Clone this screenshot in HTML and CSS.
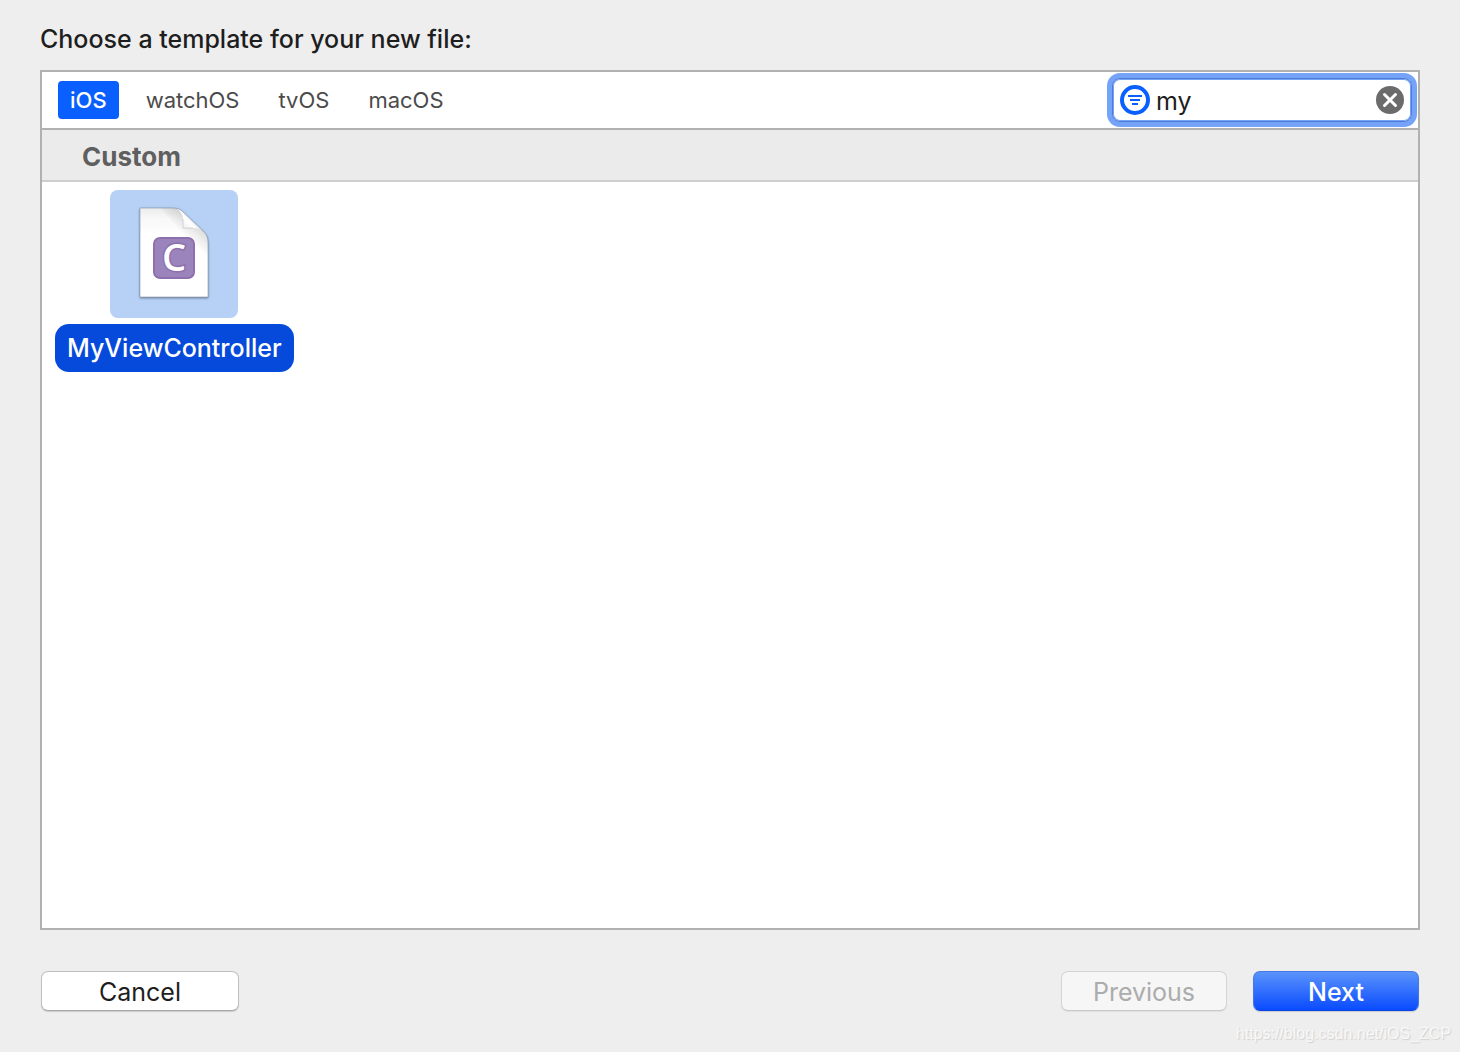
FILE: index.html
```html
<!DOCTYPE html>
<html lang="en">
<head>
  <meta charset="UTF-8">
  <meta name="viewport" content="width=device-width, initial-scale=1.0">
  <title>New File</title>
  <link rel="stylesheet" href="styles.css">
</head>
<body>

  <main class="dialog">
    <h1 class="dialog-title">Choose a template for your new file:</h1>

    <section class="panel">
      <div class="toolbar">
        <nav class="tabs">
          <button type="button" class="tab active">iOS</button>
          <button type="button" class="tab">watchOS</button>
          <button type="button" class="tab">tvOS</button>
          <button type="button" class="tab">macOS</button>
        </nav>

        <div class="search">
          <svg class="filter-icon" width="30" height="30" viewBox="0 0 30 30" aria-hidden="true">
            <circle cx="15" cy="15" r="13" fill="#fff" stroke="#0a60ff" stroke-width="4"/>
            <path d="M8 11h14M10 15h10M12 19h6" fill="none" stroke="#0a60ff" stroke-width="2"/>
          </svg>
          <input type="text" class="search-input" aria-label="Filter" value="my">
          <button type="button" class="clear-button" aria-label="Clear">
            <svg width="28" height="28" viewBox="0 0 28 28" aria-hidden="true">
              <circle cx="14" cy="14" r="14" fill="#6b6b6b"/>
              <path d="M8.500 8.500l11 11M19.500 8.500l-11 11" stroke="#fff" stroke-width="3" stroke-linecap="round"/>
            </svg>
          </button>
        </div>
      </div>

      <h2 class="group-title">Custom</h2>

      <div class="templates">
        <button type="button" class="template">
          <span class="template-icon">
            <svg width="128" height="128" viewBox="0 0 128 128" aria-hidden="true">
              <defs>
                <linearGradient id="paper" x1="0" y1="0" x2="0" y2="1">
                  <stop offset="0" stop-color="#ececec"/>
                  <stop offset="0.12" stop-color="#f8f8f8"/>
                  <stop offset="0.3" stop-color="#fff"/>
                </linearGradient>
                <linearGradient id="shade" gradientUnits="userSpaceOnUse" x1="86" y1="29" x2="72" y2="44">
                  <stop offset="0" stop-color="#000" stop-opacity="0.16"/>
                  <stop offset="1" stop-color="#000" stop-opacity="0"/>
                </linearGradient>
                <linearGradient id="fold" gradientUnits="userSpaceOnUse" x1="84" y1="28" x2="73" y2="38">
                  <stop offset="0" stop-color="#dcdcdc"/>
                  <stop offset="0.4" stop-color="#fff"/>
                  <stop offset="1" stop-color="#f0f0f0"/>
                </linearGradient>
              </defs>
              <g class="paper">
                <path d="M30 18h32c5 0 8 1 11 4l20 19c4 4 5 7 5 12v54H30z" fill="url(#paper)"/>
                <path d="M50 18h12c5 0 8 1 11 4l20 19c4 4 5 7 5 12v20z" fill="url(#shade)"/>
                <path d="M66 18.500c4 2 7 6 7 11v8.500h10c6 0 10 2 13 6l-3-3-20-19c-2-2-4-3-7-3.500z" fill="url(#fold)"/>
                <path d="M73 29v9h10" fill="none" stroke="#c4c4c4" stroke-opacity="0.7"/>
                <path d="M30 18h32c5 0 8 1 11 4l20 19c4 4 5 7 5 12v54H30z" fill="none" stroke="#8796ad" stroke-opacity="0.6"/>
              </g>
              <rect x="44" y="48" width="40" height="40" rx="6" fill="#9a84bb" stroke="#8d70ad" stroke-width="2"/>
              <text class="badge-letter" x="64" y="81" text-anchor="middle">C</text>
            </svg>
          </span>
          <span class="template-name">MyViewController</span>
        </button>
      </div>
    </section>

    <div class="actions">
      <button type="button" class="button cancel">Cancel</button>
      <button type="button" class="button previous" disabled>Previous</button>
      <button type="button" class="button next">Next</button>
    </div>
  </main>

  <div class="watermark">https://blog.csdn.net/iOS_ZCP</div>

</body>
</html>
```

FILE: styles.css
```css
:root {
  --window: #eeeeee;
  --line: #b1b1b1;
  --text: #1e1e1e;
  --accent: #0a60ff;
}

* {
  box-sizing: border-box;
}

body {
  margin: 0;
  background: var(--window);
  color: var(--text);
  font-family: Inter, "Liberation Sans", sans-serif;
  font-size: 25px;
}

button,
input {
  margin: 0;
  padding: 0;
  border: none;
  background: none;
  color: inherit;
  font: inherit;
}

.dialog {
  display: flex;
  flex-direction: column;
  min-height: 100vh;
  padding: 22px 40px 41px;
}

.dialog-title {
  margin: 0 0 14px;
  font-size: 25px;
  font-weight: 450;
  line-height: 34px;
}

.panel {
  flex: 1;
  border: 2px solid var(--line);
  background: #fff;
}

/* Platform tabs and filter */
.toolbar {
  display: flex;
  justify-content: space-between;
  align-items: center;
  height: 58px;
  padding: 0 6px 0 16px;
  border-bottom: 2px solid var(--line);
}

.tabs {
  display: flex;
  gap: 15px;
}

.tab {
  height: 38px;
  padding: 0 12px;
  border-radius: 4px;
  color: #4b4b4b;
  font-size: 22px;
}

.tab.active {
  background: var(--accent);
  color: #fff;
  font-weight: 500;
}

.search {
  display: flex;
  align-items: center;
  width: 300px;
  height: 44px;
  padding: 0 7px;
  border: 1px solid #4c7bd0;
  border-radius: 8px;
  background: #fff;
  box-shadow: 0 0 0 5px #76a3fa, inset 0 0 0 1px #76a3fa;
}

.search-input {
  flex: 1;
  min-width: 0;
  padding: 2px 0 0 6px;
  outline: none;
}

.clear-button,
.clear-button svg {
  display: block;
}

.group-title {
  margin: 0;
  padding: 4px 40px 0;
  border-bottom: 2px solid #cecece;
  background: #ebebeb;
  color: #5f5f5f;
  font-size: 26px;
  font-weight: 700;
  line-height: 46px;
}

/* Template grid */
.templates {
  display: flex;
  flex-wrap: wrap;
  padding: 8px 13px;
}

.template {
  display: flex;
  flex-direction: column;
  align-items: center;
  gap: 6px;
}

.template-icon {
  border-radius: 8px;
  background: #b6d0f6;
}

.template-icon svg {
  display: block;
}

.paper {
  filter: drop-shadow(0 1px 1px rgba(0, 0, 0, 0.4));
}

.badge-letter {
  fill: #fff;
  stroke: #8d70ad;
  stroke-width: 3px;
  paint-order: stroke;
  font-family: "Open Sans", sans-serif;
  font-size: 38px;
  font-weight: 600;
}

.template-name {
  padding: 0 12px;
  border-radius: 14px;
  background: #064adb;
  color: #fff;
  font-weight: 500;
  line-height: 48px;
}

/* Bottom buttons */
.actions {
  display: flex;
  gap: 26px;
  padding: 41px 1px 0;
}

.button {
  width: 166px;
  height: 40px;
  padding-top: 2px;
  border-radius: 7px;
}

.cancel {
  width: 198px;
  margin-right: auto;
  border: 1px solid #c0c0c0;
  border-bottom-color: #a8a8a8;
  background: #fff;
  box-shadow: 0 1px 1px rgba(0, 0, 0, 0.15);
}

.previous {
  border: 1px solid #d4d4d4;
  border-bottom-color: #c8c8c8;
  background: #f6f6f6;
  box-shadow: 0 1px 1px rgba(0, 0, 0, 0.06);
  color: #acacac;
}

.next {
  border: 1px solid #3f7ae6;
  border-bottom-color: #0a45e6;
  background: linear-gradient(#5a93fb, #0a4bff);
  box-shadow: 0 1px 1px rgba(0, 0, 0, 0.15);
  color: #fff;
  font-weight: 500;
}

.watermark {
  position: absolute;
  right: 9px;
  bottom: 9px;
  color: #f8f8f8;
  font-family: "Liberation Sans", sans-serif;
  font-size: 16px;
  line-height: 18px;
  text-shadow: 1px 1px 1px #d0d0d0;
}
```
